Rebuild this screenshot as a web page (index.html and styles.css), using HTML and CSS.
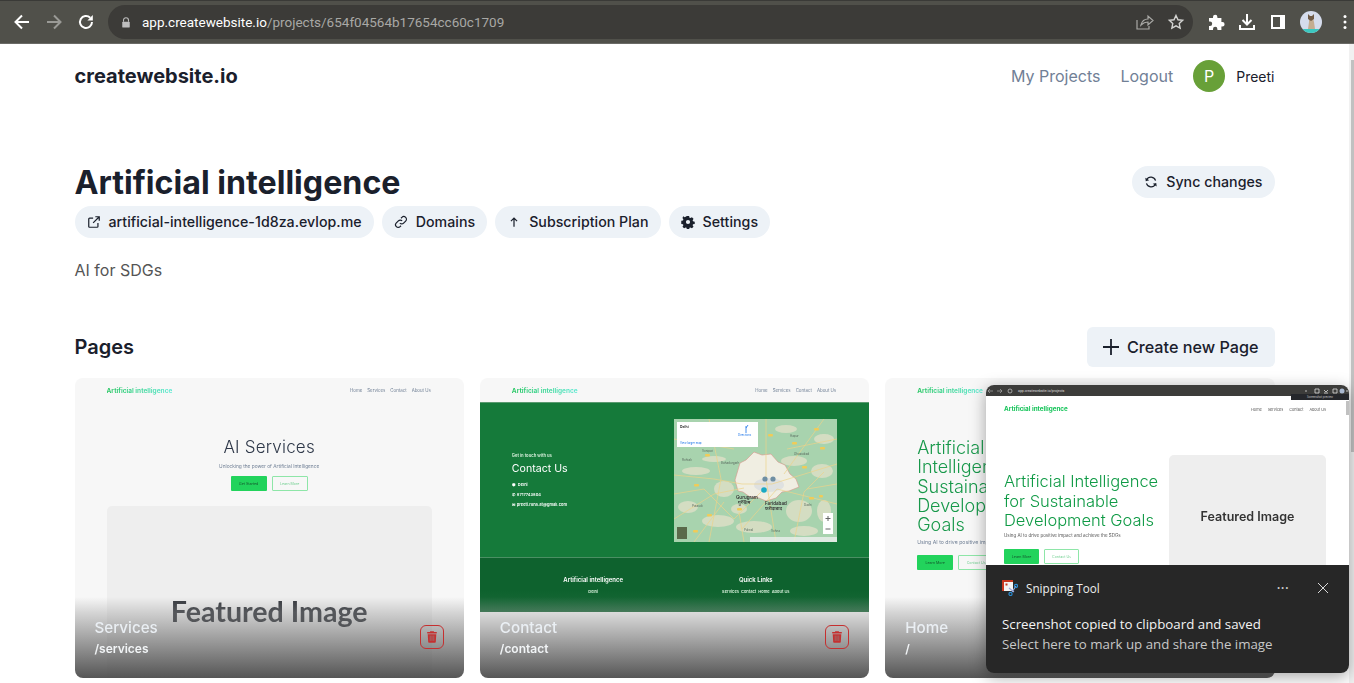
FILE: index.html
```html
<!DOCTYPE html>
<html lang="en">
<head>
<meta charset="utf-8">
<title>Artificial intelligence</title>
<link rel="stylesheet" href="styles.css">
</head>
<body>
<div class="browser-bar">
  <div class="nav-icons">
    <svg class="cicon" viewBox="0 0 20 20"><path d="M17 10H4M10 3.500 3.500 10l6.500 6.500" class="ws"/></svg>
    <svg class="cicon" viewBox="0 0 20 20"><path d="M3 10h13M10 3.500l6.500 6.500-6.500 6.500" class="gs"/></svg>
    <svg class="cicon" viewBox="0 0 20 20"><path d="M16 10a6 6 0 1 1-1.800-4.300" class="ws"/><path d="M16.800 3v5.400h-5.400z" fill="#fff"/></svg>
  </div>
  <div class="url-bar">
    <svg class="lock" viewBox="0 0 12 14"><path d="M3 6V4.200a3 3 0 0 1 6 0V6" fill="none" stroke="#bdbdbd" stroke-width="1.300"/><rect x="1.500" y="6" width="9" height="7" rx="1" fill="#bdbdbd"/></svg>
    <span class="url"><span class="url-host">app.createwebsite.io</span>/projects/654f04564b17654cc60c1709</span>
    <span class="url-actions">
      <svg class="cicon" viewBox="0 0 20 20"><path d="M3 8v9h12v-3M7 13c1-4 4-6 7-6V4l5 4.500-5 4.500v-3c-3 0-5 1-7 3z" fill="none" stroke="#a9a9a6" stroke-width="1.200"/></svg>
      <svg class="cicon" viewBox="-3 -3 26 26"><path d="m10 1.500 2.600 5.600 6.100.7-4.500 4.200 1.200 6-5.400-3-5.400 3 1.200-6-4.500-4.200 6.100-.7z" fill="none" stroke="#d4d4d2" stroke-width="1.800"/></svg>
    </span>
  </div>
  <div class="tool-icons">
    <svg class="cicon" viewBox="0 0 20 20"><path d="M3 6h4V5a2.200 2.200 0 0 1 4.400 0v1h4v4h1a2.200 2.200 0 0 1 0 4.400h-1V18h-4v-1a2.200 2.200 0 0 0-4.400 0v1H3v-4h1a2.200 2.200 0 0 0 0-4.400H3z" fill="#fff"/></svg>
    <svg class="cicon" viewBox="0 0 20 20"><path d="M10 2v10M5.500 8l4.500 4.500L14.500 8M3 13v4h14v-4" class="ws"/></svg>
    <svg class="cicon" viewBox="0 0 20 20"><path d="M3 3h14v14H3z" fill="#fff"/><path d="M5 5h7v10H5z" fill="#50504a"/></svg>
    <svg class="browser-avatar" viewBox="0 0 22 22"><defs><clipPath id="ac"><circle cx="11" cy="11" r="11"/></clipPath></defs><g clip-path="url(#ac)"><rect width="22" height="22" fill="#d5dcec"/><rect y="18" width="22" height="4" fill="#3cc8c0"/><path d="M9 7h4l1 4 1 7H8l1-7z" fill="#c4ad90"/><path d="M8 3l2 2h2l2-2v5l-3 2-3-2z" fill="#6e5a46"/></g></svg>
    <svg class="kebab" viewBox="0 0 4 16"><circle cx="2" cy="2.500" r="1.500" fill="#fff"/><circle cx="2" cy="8" r="1.500" fill="#fff"/><circle cx="2" cy="13.500" r="1.500" fill="#fff"/></svg>
  </div>
</div>

<div class="viewport">
  <main class="page">
    <header class="site-header">
      <div class="logo">createwebsite.io</div>
      <nav class="site-nav">
        <a class="nav-link">My Projects</a>
        <a class="nav-link">Logout</a>
        <span class="user-avatar">P</span>
        <span class="user-name">Preeti</span>
      </nav>
    </header>

    <section class="title-row">
      <h1 class="title">Artificial intelligence</h1>
      <a class="pill">
        <svg class="pill-icon" viewBox="0 0 16 16"><path d="M13.200 6.500A5.500 5.500 0 0 0 3 5.500M2.800 9.500A5.500 5.500 0 0 0 13 10.500" class="ds"/><path d="m1.500 3 .5 4 4-1zM14.500 13l-.5-4-4 1z" fill="#1a202c"/></svg>
        Sync changes
      </a>
    </section>

    <div class="pill-row">
      <a class="pill"><svg class="pill-icon" viewBox="0 0 16 16"><path d="M12.500 9v4a1 1 0 0 1-1 1H3a1 1 0 0 1-1-1V4.500a1 1 0 0 1 1-1h4M9.500 2H14v4.500M14 2 7 9" class="ds"/></svg>artificial-intelligence-1d8za.evlop.me</a>
      <a class="pill"><svg class="pill-icon" viewBox="0 0 16 16"><path d="M6.700 9.300a3 3 0 0 0 4.300 0l2.300-2.300A3 3 0 0 0 9 2.700l-1 1M9.300 6.700a3 3 0 0 0-4.300 0L2.700 9A3 3 0 0 0 7 13.300l1-1" class="ds"/></svg>Domains</a>
      <a class="pill"><svg class="pill-icon" viewBox="0 0 16 16"><path d="M8 13.500v-10M4.500 7 8 3.500 11.500 7" class="ds"/></svg>Subscription Plan</a>
      <a class="pill"><svg class="pill-icon" viewBox="0 0 16 16"><path fill-rule="evenodd" d="M6.700 1h2.600l.4 2 1 .5 1.800-1 1.800 1.900-1 1.800.4 1 2 .4v2.600l-2 .4-.4 1 1 1.800-1.800 1.800-1.800-1-1 .4-.4 2H6.700l-.4-2-1-.4-1.800 1-1.800-1.800 1-1.800-.4-1-2-.4V6.600l2-.4.4-1-1-1.800L2.500 1.500l1.800 1 1-.5zM8 5.600a2.400 2.400 0 1 0 0 4.800 2.400 2.400 0 0 0 0-4.800z" fill="#1a202c"/></svg>Settings</a>
    </div>

    <p class="description">AI for SDGs</p>

    <section class="pages-row">
      <h2 class="pages-title">Pages</h2>
      <a class="create-btn"><svg class="plus" viewBox="0 0 16 16"><path d="M8 0v16M0 8h16" stroke="#1a202c" stroke-width="1.800" fill="none"/></svg>Create new Page</a>
    </section>

    <section class="card-grid">
      <article class="card">
        <div class="thumb">
          <div class="mini-nav"><span class="mini-logo">Artificial intelligence</span><span class="mini-links"><span>Home</span><span>Services</span><span>Contact</span><span>About Us</span></span></div>
          <div class="svc-hero">
            <div class="svc-title">AI Services</div>
            <div class="svc-sub">Unlocking the power of Artificial Intelligence</div>
            <div class="mini-btns center"><span class="mini-btn solid">Get Started</span><span class="mini-btn ghost">Learn More</span></div>
            <div class="svc-image">Featured Image</div>
          </div>
        </div>
        <div class="card-overlay">
          <div class="card-text"><div class="card-name">Services</div><div class="card-path">/services</div></div>
          <button class="trash"><svg viewBox="0 0 448 512"><path d="M135.200 17.700 128 32H32C14.300 32 0 46.300 0 64s14.300 32 32 32h384c17.700 0 32-14.300 32-32s-14.300-32-32-32h-96l-7.200-14.300C307.400 6.800 296.300 0 284.200 0H163.800c-12.100 0-23.200 6.800-28.600 17.700zM416 128H32l21.200 339c1.600 25.300 22.600 45 47.900 45h245.800c25.300 0 46.300-19.700 47.900-45z" fill="#c53030"/><path d="M144 192v240M224 192v240M304 192v240" stroke="#8a8a8a" stroke-width="28"/></svg></button>
        </div>
      </article>

      <article class="card">
        <div class="thumb thumb-white">
          <div class="mini-nav"><span class="mini-logo">Artificial intelligence</span><span class="mini-links"><span>Home</span><span>Services</span><span>Contact</span><span>About Us</span></span></div>
          <div class="contact-band">
            <div class="contact-info">
              <div class="contact-kicker">Get in touch with us</div>
              <div class="contact-title">Contact Us</div>
              <div class="contact-line">⬢&nbsp; Delhi</div>
              <div class="contact-line">✆&nbsp; 8717743804</div>
              <div class="contact-line">✉&nbsp; preeti.rana.at@gmail.com</div>
            </div>
            <svg class="map" viewBox="0 0 163 123">
              <rect width="163" height="123" fill="#a8d3ae"/>
              <g fill="#dfe0c8" opacity=".8">
                <ellipse cx="22" cy="52" rx="14" ry="4"/><ellipse cx="40" cy="40" rx="12" ry="3"/><ellipse cx="14" cy="88" rx="10" ry="6"/>
                <ellipse cx="50" cy="70" rx="10" ry="8"/><ellipse cx="44" cy="102" rx="16" ry="6"/><ellipse cx="80" cy="108" rx="18" ry="6"/>
                <ellipse cx="125" cy="92" rx="13" ry="11"/><ellipse cx="120" cy="42" rx="13" ry="5"/><ellipse cx="148" cy="52" rx="11" ry="7"/>
                <ellipse cx="150" cy="20" rx="10" ry="5"/><ellipse cx="112" cy="10" rx="11" ry="4"/><ellipse cx="130" cy="112" rx="14" ry="5"/>
                <ellipse cx="65" cy="90" rx="8" ry="5"/><ellipse cx="150" cy="92" rx="7" ry="11"/>
              </g>
              <path d="M66 44l6-3 8-8 8 3 9-1 7 8 7 3 5 9 6 5 3 8-10 4-7 1-6 6-10 3-7-3-9-1-7-5-5-1-3-11z" fill="#f0eee2" stroke="#d9958a" stroke-width=".6"/>
              <ellipse cx="95" cy="66" rx="15" ry="7" fill="#dfe1e0"/>
              <g fill="none" stroke="#ecd38a" stroke-width=".7">
                <path d="M0 56 40 60l28 5 30 0 65-20M0 100l40-25 30-6M92 0l0 60 10 63M35 0l12 60-12 63M163 85l-60-15-35 40M20 123l30-40M150 0l-40 55M60 30 0 20M163 20l-50 10M0 75l30-5 30 30 30-30M120 123l10-50 20-20M70 123l-5-30M163 65l-30 5"/>
              </g>
              <g fill="#f0cb58"><rect x="31" y="35" width="5" height="2.500" rx="1"/><rect x="94" y="15" width="5" height="2.500" rx="1"/><rect x="118" y="23" width="5" height="2.500" rx="1"/><rect x="146" y="28" width="5" height="2.500" rx="1"/><rect x="20" y="65" width="5" height="2.500" rx="1"/><rect x="128" y="47" width="5" height="2.500" rx="1"/><rect x="135" y="78" width="5" height="2.500" rx="1"/><rect x="19" y="111" width="5" height="2.500" rx="1"/><rect x="33" y="95" width="5" height="2.500" rx="1"/><rect x="140" y="9" width="5" height="2.500" rx="1"/><rect x="63" y="89" width="5" height="2.500" rx="1"/><rect x="145" y="76" width="4" height="2.500" rx="1"/></g>
              <g fill="#6f8fa3"><circle cx="91" cy="60" r="2.600"/><circle cx="99" cy="60" r="2.600"/></g>
              <circle cx="90" cy="71" r="2.800" fill="#1aa9c4"/>
              <g class="map-tiny"><text x="28" y="33">Sonipat</text><text x="116" y="18">Hapur</text><text x="120" y="36">Ghaziabad</text><text x="8" y="42">Rohtak</text><text x="47" y="45">Bahadurgarh</text><text x="130" y="87">Dadri</text><text x="18" y="88">Pataudi</text><text x="70" y="112">Palwal</text><text x="97" y="113">Sohna</text></g>
              <text x="62" y="80" class="map-label">Gurugram</text><text x="64" y="85" class="map-label">गुरुग्राम</text>
              <text x="91" y="86" class="map-label">Faridabad</text><text x="91" y="91" class="map-label">फरीदाबाद</text>
              <rect x="3" y="3" width="81" height="25" fill="#fff"/>
              <text x="6" y="9" class="map-card">Delhi</text>
              <path d="M72 7v7M72 9l2-3" stroke="#1a73e8" stroke-width=".8" fill="none"/>
              <text x="64" y="17" class="map-link">Directions</text><text x="6" y="25" class="map-link">View larger map</text>
              <rect x="149" y="94" width="10" height="21" fill="#fff"/>
              <path d="M154 97v5M151.500 99.500h5M151.500 110h5" stroke="#666" stroke-width="1"/>
              <rect x="3" y="108" width="10" height="12" fill="#5a6a4a"/>
              <rect x="76" y="118" width="87" height="5" fill="#f2f2f2" opacity=".75"/>
            </svg>
          </div>
          <div class="contact-footer">
            <div class="foot-col"><div class="foot-title">Artificial intelligence</div><div class="foot-text">Delhi</div></div>
            <div class="foot-col"><div class="foot-title">Quick Links</div><div class="foot-text">Services&nbsp; Contact&nbsp; Home&nbsp; About Us</div></div>
          </div>
        </div>
        <div class="card-overlay">
          <div class="card-text"><div class="card-name">Contact</div><div class="card-path">/contact</div></div>
          <button class="trash"><svg viewBox="0 0 448 512"><path d="M135.200 17.700 128 32H32C14.300 32 0 46.300 0 64s14.300 32 32 32h384c17.700 0 32-14.300 32-32s-14.300-32-32-32h-96l-7.200-14.300C307.400 6.800 296.300 0 284.200 0H163.800c-12.100 0-23.200 6.800-28.600 17.700zM416 128H32l21.200 339c1.600 25.300 22.600 45 47.900 45h245.800c25.300 0 46.300-19.700 47.900-45z" fill="#c53030"/><path d="M144 192v240M224 192v240M304 192v240" stroke="#8a8a8a" stroke-width="28"/></svg></button>
        </div>
      </article>

      <article class="card">
        <div class="thumb">
          <div class="mini-nav"><span class="mini-logo">Artificial intelligence</span></div>
          <div class="home-hero">
            <div class="home-title">Artificial Intelligence for Sustainable Development Goals</div>
            <div class="home-sub">Using AI to drive positive impact and achieve the SDGs</div>
            <div class="mini-btns"><span class="mini-btn solid">Learn More</span><span class="mini-btn ghost">Contact Us</span></div>
          </div>
        </div>
        <div class="card-overlay">
          <div class="card-text"><div class="card-name">Home</div><div class="card-path">/</div></div>
        </div>
      </article>
    </section>
  </main>
  <aside class="scrollbar"><div class="scroll-thumb"></div></aside>
</div>

<aside class="snip">
  <div class="snip-shot">
    <div class="shot-bar">
      <svg class="shot-icons" viewBox="0 0 28 8"><path d="M2 4h5M2 4l2-2M2 4l2 2M11 4h5M16 4l-2-2M16 4l-2 2" stroke="#aaa" stroke-width=".7" fill="none"/><circle cx="24" cy="4" r="2" fill="none" stroke="#ccc" stroke-width=".7"/></svg>
      <span class="shot-url">app.createwebsite.io/projects</span>
      <svg class="shot-tools" viewBox="0 0 58 8"><path d="M14 4h2M24 2h4v4h-4zM33 3l2 2 2-2M33 6h4M42 2h4v4h-4z" stroke="#ddd" stroke-width=".8" fill="none"/><circle cx="51" cy="4" r="2.500" fill="#a9b8cf"/><circle cx="56" cy="4" r=".8" fill="#ddd"/></svg>
      <span class="shot-tip">Screenshot preview</span>
    </div>
    <div class="shot-page">
      <div class="shot-nav"><span class="shot-logo">Artificial intelligence</span><span class="shot-links"><span>Home</span><span>Services</span><span>Contact</span><span>About Us</span></span></div>
      <div class="shot-hero">
        <div class="shot-copy">
          <div class="shot-title">Artificial Intelligence<br>for Sustainable<br>Development Goals</div>
          <div class="shot-sub">Using AI to drive positive impact and achieve the SDGs</div>
          <div class="mini-btns"><span class="mini-btn solid shot-btn">Learn More</span><span class="mini-btn ghost shot-btn">Contact Us</span></div>
        </div>
        <div class="shot-image">Featured Image</div>
      </div>
      <div class="shot-scroll"></div>
    </div>
  </div>
  <div class="toast">
    <div class="toast-head">
      <svg class="snip-icon" viewBox="0 0 16 16"><rect x="0" y="0" width="11" height="11" fill="#f3f3f3"/><path d="M0 0h11v2H0zM0 2h2v9H0z" fill="#c8371f"/><rect x="3.500" y="3.500" width="2" height="2" fill="#c8371f"/><path d="M7 8l5 4M14 6l-4 6" stroke="#9ad" stroke-width="1.200"/><circle cx="14" cy="6" r="1.600" fill="none" stroke="#2a8dd4" stroke-width="1.100"/><circle cx="8.500" cy="14" r="1.600" fill="none" stroke="#2a8dd4" stroke-width="1.100"/></svg>
      <span class="toast-app">Snipping Tool</span>
      <span class="toast-more">···</span>
      <svg class="toast-close" viewBox="0 0 10 10"><path d="M0 0l10 10M10 0 0 10" stroke="#d8d8d8" stroke-width="1"/></svg>
    </div>
    <div class="toast-main">Screenshot copied to clipboard and saved</div>
    <div class="toast-sub">Select here to mark up and share the image</div>
  </div>
</aside>
</body>
</html>
```
FILE: styles.css
```css
* { box-sizing: border-box; }
html, body { margin: 0; height: 683px; overflow: hidden; background: #fff; }
body { font-family: Inter, "Liberation Sans", sans-serif; color: #1a202c; position: relative; }
h1, h2, p { margin: 0; }

.browser-bar { height: 44px; background: #50504a; border-top: 1px solid #3a3a37; border-bottom: 1px solid #6a6a66; display: flex; align-items: center; font-family: Roboto, sans-serif; }
.nav-icons { display: flex; gap: 12px; padding-left: 12px; width: 108px; flex: none; }
.cicon { width: 20px; height: 20px; flex: none; }
.ws { fill: none; stroke: #fff; stroke-width: 2; }
.gs { fill: none; stroke: #9a9a96; stroke-width: 2; }
.url-bar { width: 1085px; height: 34px; background: #3c3b38; border-radius: 17px; display: flex; align-items: center; padding: 0 7px 0 13px; flex: none; }
.lock { width: 10px; height: 13px; margin-right: 11px; }
.url { font-size: 13.500px; color: #a8a8a5; flex: 1; }
.url-host { color: #fff; }
.url-actions { display: flex; gap: 12px; }
.tool-icons { flex: 1; display: flex; align-items: center; gap: 11px; padding-left: 13px; }
.browser-avatar { width: 22px; height: 22px; margin-left: 1px; }
.kebab { width: 4px; height: 16px; margin-left: 10px; }

.viewport { display: flex; height: 639px; overflow: hidden; }
.page { width: 1200px; margin-left: 74.500px; margin-right: 74.500px; flex: none; }
.scrollbar { width: 5px; background: #f1f1f1; flex: none; padding-top: 16px; padding-left: 2px; }
.scroll-thumb { height: 392px; background: #c1c1c1; }

.site-header { height: 64px; display: flex; align-items: center; justify-content: space-between; }
.logo { font-size: 20px; font-weight: 700; }
.site-nav { display: flex; align-items: center; }
.nav-link { font-size: 16px; color: #718096; margin-right: 20px; }
.user-avatar { width: 32px; height: 32px; border-radius: 50%; background: #68a038; color: #fff; font-size: 16px; display: flex; align-items: center; justify-content: center; }
.user-name { font-size: 14px; font-weight: 400; margin-left: 11px; }

.title-row { display: flex; justify-content: space-between; align-items: flex-start; margin-top: 54px; height: 40px; }
.title { font-size: 32.200px; line-height: 42px; font-weight: 700; }
.title-row .pill { margin-top: 4px; }
.pill-row { display: flex; gap: 8px; margin-top: 4px; }
.pill { height: 32px; border-radius: 16px; background: #edf2f7; display: inline-flex; align-items: center; padding: 0 12px 1px; gap: 8px; font-size: 14.200px; font-weight: 500; letter-spacing: .03px; white-space: nowrap; }
.pill-icon { width: 14px; height: 14px; flex: none; }
.ds { fill: none; stroke: #1a202c; stroke-width: 1.400; }
.description { font-size: 16px; line-height: 24px; color: #555; margin-top: 20px; }
.pages-row { display: flex; justify-content: space-between; align-items: center; margin-top: 45px; height: 40px; }
.pages-title { font-size: 20px; font-weight: 600; }
.create-btn { height: 40px; padding: 0 16px 1px; background: #edf2f7; border-radius: 6px; display: flex; align-items: center; gap: 8px; font-size: 16.200px; font-weight: 500; }
.plus { width: 16px; height: 16px; }

.card-grid { display: grid; grid-template-columns: repeat(3, 1fr); gap: 16px; margin-top: 11px; }
.card { height: 300px; border-radius: 8px; overflow: hidden; position: relative; background: #fff; }
.thumb { height: 100%; background: #f7f7f7; filter: blur(.35px); }
.thumb-white { background: #fff; }
.card-overlay { position: absolute; left: 0; right: 0; bottom: 0; height: 81px; padding: 0 20px 18px; display: flex; justify-content: space-between; align-items: flex-end; background: linear-gradient(to bottom, rgba(150,150,150,0), rgba(150,150,150,.35) 19%, rgba(72,72,72,.92)); }
.card-name { font-size: 15.200px; font-weight: 500; color: #edf2f7; line-height: 20px; }
.card-path { font-size: 12px; font-weight: 600; color: #f7fafc; line-height: 22px; }
.card-text { opacity: .95; }
.trash { width: 24px; height: 24px; padding: 0; margin-bottom: 11px; background: transparent; border: 1px solid #c53030; border-radius: 6px; display: flex; align-items: center; justify-content: center; }
.trash svg { width: 10px; height: 12px; }

.mini-nav { height: 24px; padding: 1px 33px 0 32px; display: flex; justify-content: space-between; align-items: center; background: #f7f7f7; }
.mini-logo { font-size: 6.500px; font-weight: 700; background: linear-gradient(90deg, #22c55e, #5eead4); -webkit-background-clip: text; background-clip: text; color: transparent; }
.mini-links { display: flex; gap: 5px; font-size: 4.400px; color: #718096; }

.svc-hero { display: flex; flex-direction: column; align-items: center; padding: 33px 32px 0; }
.svc-title { font-size: 17px; font-weight: 300; line-height: 24px; color: #2d3748; letter-spacing: .2px; }
.svc-sub { font-size: 4.800px; color: #718096; margin-top: 3px; line-height: 8px; }
.mini-btns { display: flex; gap: 5px; }
.center { justify-content: center; margin-top: 6px; }
.mini-btn { height: 15px; width: 36px; font-size: 3.600px; display: flex; align-items: center; justify-content: center; border-radius: 1px; }
.solid { background: #22d35c; color: #14532d; }
.ghost { border: 1px solid #8ee6a8; color: #6fcf8f; }
.svc-image { align-self: stretch; margin-top: 15px; height: 240px; background: #eee; border-radius: 5px; padding-top: 87px; text-align: center; font-family: Lato, sans-serif; font-weight: 700; font-size: 28.600px; line-height: 36px; color: #33363c; }

.contact-band { height: 156px; background: #157a3a; border-top: 1px solid #5a9a70; border-bottom: 1px solid #4a8f63; padding: 0 32px; display: flex; justify-content: space-between; align-items: center; }
.contact-info { color: #fff; padding-top: 3px; }
.contact-kicker { font-size: 4.200px; font-weight: 600; line-height: 5px; color: #d8f0dc; }
.contact-title { font-size: 10.600px; line-height: 14px; margin: 4.500px 0 4px; }
.contact-line { font-size: 4px; font-weight: 600; line-height: 10px; }
.map { width: 163px; height: 123px; flex: none; filter: blur(.25px); }
.map-label { font-size: 4.500px; font-weight: 600; fill: #333; font-family: Inter, "Noto Sans", sans-serif; }
.map-tiny { font-size: 3px; fill: #5b6b5f; }
.map-card { font-size: 3.500px; font-weight: 600; fill: #222; }
.map-link { font-size: 2.800px; fill: #1a73e8; }
.contact-footer { height: 54px; background: linear-gradient(#0e622e 60%, #1b6a3a); display: grid; grid-template-columns: 1fr 1fr; padding: 17px 32px 0; color: #fff; text-align: center; }
.foot-title { font-size: 6px; font-weight: 600; line-height: 10px; }
.foot-text { font-size: 4px; font-weight: 600; line-height: 8px; margin-top: 3px; color: #d8f0dc; }

.home-hero { padding: 36px 32px 0; }
.home-title { font-size: 18px; font-weight: 300; line-height: 19.300px; color: #17984a; width: 150px; }
.home-sub { font-size: 5.200px; color: #718096; margin-top: 4px; line-height: 8px; white-space: nowrap; }
.home-hero .mini-btns { margin-top: 9px; }

.snip { position: absolute; left: 986px; top: 385px; width: 363px; border-radius: 8px; overflow: hidden; box-shadow: 0 4px 16px rgba(0,0,0,.35); }
.snip-shot { height: 180px; background: #fff; display: flex; flex-direction: column; }
.shot-bar { height: 11px; background: #3c3c3a; flex: none; position: relative; display: flex; align-items: center; font-size: 3.500px; color: #ddd; font-family: Roboto, sans-serif; }
.shot-icons { width: 28px; height: 8px; flex: none; margin-right: 4px; }
.shot-url { flex: 1; }
.shot-tools { width: 58px; height: 8px; flex: none; }
.shot-tip { position: absolute; right: 0; top: 9px; width: 58px; height: 6px; background: #25272b; color: #bbb; font-size: 3px; line-height: 6px; text-align: center; }
.shot-page { flex: 1; padding: 0 23px 0 18px; position: relative; filter: blur(.3px); overflow: hidden; }
.shot-nav { display: flex; justify-content: space-between; align-items: center; height: 26px; }
.shot-logo { font-size: 6.300px; font-weight: 700; color: #16c45a; }
.shot-links { display: flex; gap: 6px; font-size: 3.800px; color: #555; }
.shot-hero { display: flex; gap: 11px; align-items: flex-start; }
.shot-copy { width: 154px; padding-top: 50px; flex: none; }
.shot-title { font-size: 16.500px; line-height: 19.500px; font-weight: 300; color: #0f9a45; white-space: nowrap; }
.shot-sub { font-size: 4.500px; color: #555; line-height: 8px; margin-top: 1.500px; white-space: nowrap; }
.shot-copy .mini-btns { margin-top: 9px; }
.shot-btn { height: 15px; width: 35px; }
.shot-image { width: 157px; height: 140px; margin-top: 33px; background: #eee; border-radius: 5px; padding-top: 50px; text-align: center; font-size: 12.500px; font-weight: 600; color: #333; line-height: 24px; }
.shot-scroll { position: absolute; right: 0; top: 5px; width: 3px; height: 14px; background: #c1c1c1; }

.toast { height: 108px; background: #272727; color: #fff; padding: 14px 21px 0 16px; font-family: "Open Sans", sans-serif; }
.toast-head { display: flex; align-items: center; height: 18px; }
.snip-icon { width: 16px; height: 16px; flex: none; }
.toast-app { font-size: 11.700px; margin-left: 8px; color: #eee; flex: 1; }
.toast-more { font-size: 16px; color: #cfcfcf; margin-right: 29px; }
.toast-close { width: 10px; height: 10px; }
.toast-main { font-size: 13.300px; line-height: 20px; margin-top: 17px; color: #f4f4f4; white-space: nowrap; }
.toast-sub { font-size: 13.300px; line-height: 20px; color: #c8c8c8; white-space: nowrap; }
```
